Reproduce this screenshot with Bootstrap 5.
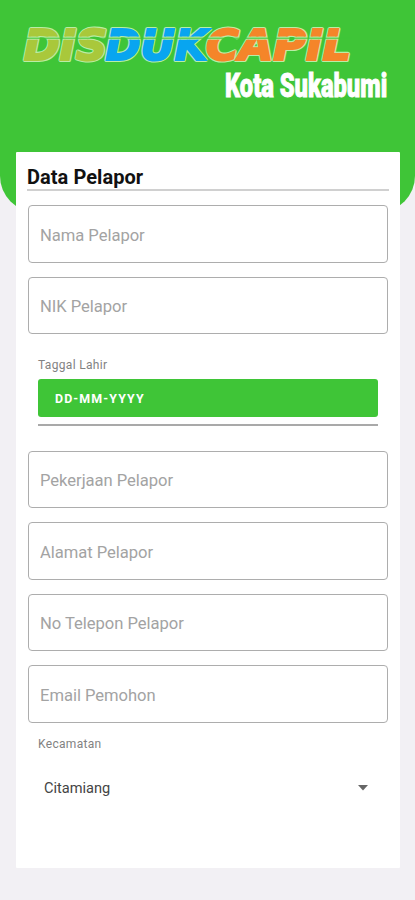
<!DOCTYPE html>
<html lang="id">
<head>
<meta charset="utf-8">
<meta name="viewport" content="width=device-width, initial-scale=1">
<title>Data Pelapor</title>
<link href="https://cdn.jsdelivr.net/npm/bootstrap@5.3.0/dist/css/bootstrap.min.css" rel="stylesheet">
<style>
  body { background: #f2f0f4; font-family: Roboto, "Liberation Sans", sans-serif; height: 900px; overflow: hidden; }
  .hero { background: #3fc537; height: 212px; border-radius: 0 0 36px 36px; }
  .hero svg { display: block; }
  .sheet { margin: -60px 15px 0 16px; height: 716px; padding: 12px 12px 0; border-radius: 1px; }
  .sheet-title { font-size: 20px; line-height: 27px; font-weight: 700; color: #111; margin: 0 -1px 14px; border-bottom: 2px solid #d0d0d0; height: 27.4px; letter-spacing: .05px; box-sizing: border-box; }
  .field { height: 57.5px; border: 1.4px solid #adadad; border-radius: 4px; padding: 2px 11px 0; font-size: 16.6px; letter-spacing: -.04px; color: #444; box-shadow: none; background: #fff; }
  .field::placeholder { color: #a3a3a3; opacity: 1; }
  .stack { gap: 14.1px; }
  .caption { font-size: 12px; line-height: 16px; letter-spacing: .32px; color: #828282; }
  .date-block { margin: 22.6px 10px 24.6px; }
  .date-btn { background: #3fc537; color: #fff; height: 38px; border-radius: 3px; border: 0; font-size: 12.4px; font-weight: 700; letter-spacing: 1.12px; padding: 2px 17px 0; margin-top: 6px; }
  .date-rule { height: 2px; background: #a9a9a9; margin-top: 7px; }
  .district { margin: 13px 10px 0; }
  .district-value { font-size: 14.6px; line-height: 20px; color: #444; margin-top: 26px; padding: 0 10px 0 6px; }
</style>
<script src="https://cdn.jsdelivr.net/npm/bootstrap@5.3.0/dist/js/bootstrap.bundle.min.js"></script>
</head>
<body>
<header class="hero">
  <svg width="415" height="120" viewBox="0 0 415 120" role="img" aria-label="DISDUKCAPIL Kota Sukabumi">
    <defs>
      <clipPath id="bands"><path d="M0 20H415V36.6H0zM0 39.8H415V70H0z"/></clipPath>
      <g id="word" font-family="'DejaVu Sans', sans-serif" font-weight="700" font-style="italic" font-size="42.5">
        <text x="24" y="60.2" textLength="83" lengthAdjust="spacingAndGlyphs" fill="var(--a)" stroke="var(--a)">DIS</text>
        <text x="105.5" y="60.2" textLength="102" lengthAdjust="spacingAndGlyphs" fill="var(--b)" stroke="var(--b)">DUK</text>
        <text x="206" y="60.2" textLength="145" lengthAdjust="spacingAndGlyphs" fill="var(--c)" stroke="var(--c)">CAPIL</text>
      </g>
    </defs>
    <use href="#word" stroke-width="4.2" stroke-linejoin="round" style="--a:#b9eda6;--b:#b9eda6;--c:#b9eda6"/>
    <use href="#word" stroke-width="2" clip-path="url(#bands)" style="--a:#a9c83b;--b:#08a5f0;--c:#f58529"/>
    <path d="M20 38.2H352" stroke="#3fc537" stroke-width="1"/>
    <text transform="translate(225 97) scale(.697 1)" font-family="Roboto, 'Liberation Sans', sans-serif" font-weight="900" font-size="34" fill="#fff" stroke="#fff" stroke-width="1">Kota Sukabumi</text>
  </svg>
</header>
<main class="sheet bg-white position-relative">
  <h1 class="sheet-title">Data Pelapor</h1>
  <form>
    <div class="stack d-flex flex-column">
      <input class="form-control field" placeholder="Nama Pelapor">
      <input class="form-control field" placeholder="NIK Pelapor">
    </div>
    <div class="date-block">
      <div class="caption">Taggal Lahir</div>
      <button type="button" class="date-btn d-block w-100 text-start">DD-MM-YYYY</button>
      <div class="date-rule"></div>
    </div>
    <div class="stack d-flex flex-column">
      <input class="form-control field" placeholder="Pekerjaan Pelapor">
      <input class="form-control field" placeholder="Alamat Pelapor">
      <input class="form-control field" placeholder="No Telepon Pelapor">
      <input class="form-control field" placeholder="Email Pemohon">
    </div>
    <div class="district">
      <div class="caption">Kecamatan</div>
      <div class="district-value d-flex justify-content-between align-items-center">
        <span>Citamiang</span>
        <svg width="10" height="6" viewBox="0 0 10 6" aria-hidden="true"><path d="M0 0h10L5 5.5z" fill="#666"/></svg>
      </div>
    </div>
  </form>
</main>
</body>
</html>
